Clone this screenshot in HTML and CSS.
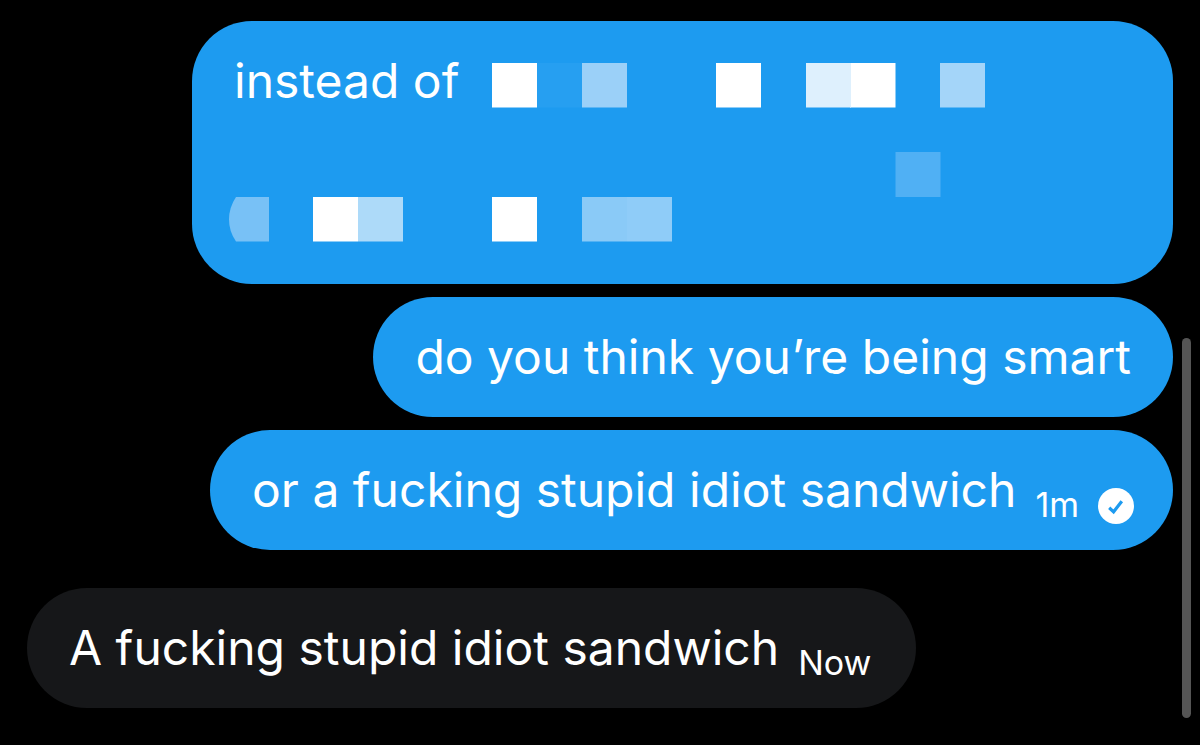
FILE: index.html
```html
<!DOCTYPE html>
<html lang="en">
<head>
<meta charset="utf-8">
<title>Messages</title>
<link rel="stylesheet" href="styles.css">
</head>
<body>
<main class="chat">
  <div class="bubble sent redacted">
    <p class="text">instead of</p>
    <svg class="mosaic" viewBox="229 62 757 180" width="757" height="180" role="img" aria-label="Hidden words">
      <g fill="#fff"><path d="M492 63h45v44.5h-45zM716 63h45v44.5h-45zM850 63h45.5v44.5h-45.5zM313 197h45v44.5h-45zM492 197h45v44.5h-45z"/></g>
      <path fill="#269ff1" d="M537 63h45v44.5h-45z"/>
      <path fill="#9bd0f8" d="M582 63h45v44.5h-45z"/>
      <path fill="#def0fd" d="M806 63h45v44.5h-45z"/>
      <path fill="#a4d5f9" d="M940 63h45v44.5h-45z"/>
      <path fill="#50b0f4" d="M895.5 152h45v45h-45z"/>
      <path fill="#78c1f6" d="M236 197h33v44.5h-33q-7-10-7-22t7-22.5z"/>
      <path fill="#addaf9" d="M358 197h45v44.5h-45z"/>
      <path fill="#8acaf7" d="M582 197h45v44.5h-45z"/>
      <path fill="#8fccf8" d="M627 197h45v44.5h-45z"/>
    </svg>
  </div>
  <div class="bubble sent"><p class="text">do you think you’re being smart</p></div>
  <div class="bubble sent status">
    <p class="text">or a fucking stupid idiot sandwich</p>
    <span class="time">1m</span>
    <svg class="check" viewBox="0 0 36 36" role="img" aria-label="Delivered"><circle cx="18" cy="18" r="18" fill="#fff"/><path d="M11.2 19.8l4.4 4 8.2-10.6" fill="none" stroke="#1d9bf0" stroke-width="3.2"/></svg>
  </div>
  <div class="bubble received">
    <p class="text">A fucking stupid idiot sandwich</p>
    <span class="time">Now</span>
  </div>
</main>
<div class="scrollbar"></div>
</body>
</html>
```
FILE: styles.css
```css
* { box-sizing: border-box; }
body { margin: 0; background: #000; color: #fff; font-family: Inter, "Liberation Sans", sans-serif; }
.chat { display: flex; flex-direction: column; align-items: flex-end; gap: 13px; padding: 21px 27px 37px; }
.bubble { display: flex; align-items: flex-end; min-height: 120px; padding: 30px 42px; border-radius: 60px; background: #1d9bf0; }
.text { margin: 0; font-size: 48px; line-height: 60px; white-space: nowrap; }
.redacted { position: relative; align-items: flex-start; width: calc(100% - 165px); min-height: 263px; }
.mosaic { position: absolute; left: 37px; top: 41px; }
.time { margin-left: 19px; font-size: 34px; line-height: 30px; }
.status { padding-right: 39px; }
.check { width: 36px; height: 36px; margin: 0 0 -4px 19px; }
.received { align-self: flex-start; margin-top: 25px; padding-right: 45px; background: #161719; }
.scrollbar { position: fixed; right: 9px; top: 338px; width: 9px; height: 380px; border-radius: 5px; background: #555; }
```
